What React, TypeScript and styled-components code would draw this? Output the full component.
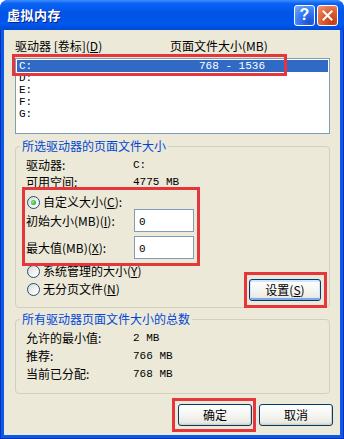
import React from "react";
import styled, { createGlobalStyle } from "styled-components";

const GlobalStyle = createGlobalStyle`
  html, body { margin: 0; padding: 0; background: #ffffff; }
  body {
    font-family: "Noto Sans CJK SC", "Noto Sans", sans-serif;
    font-size: 12px;
    color: #000;
  }
  * { box-sizing: border-box; }
`;

const Window = styled.div`
  width: 344px;
  height: 439px;
  display: flex;
  flex-direction: column;
  background: #0055e5;
  border-radius: 8px 8px 0 0;
  overflow: hidden;
`;

const TitleBar = styled.div`
  height: 30px;
  flex: none;
  display: flex;
  align-items: center;
  gap: 2px;
  padding: 0 6px 0 7px;
  background: linear-gradient(
    180deg,
    #3d8eff 0%,
    #0b62f4 12%,
    #0054e6 45%,
    #0058ee 80%,
    #0048d2 100%
  );
`;

const Title = styled.div`
  flex: 1;
  color: #ffffff;
  font-weight: bold;
  font-size: 13px;
  line-height: 14px;
  letter-spacing: 0.5px;
  text-shadow: 1px 1px 0 #0a1b8a;
`;

const CaptionButton = styled.div<{ $variant: "help" | "close" }>`
  width: 21px;
  height: 21px;
  border: 1px solid #ffffff;
  border-radius: 3px;
  display: flex;
  align-items: center;
  justify-content: center;
  color: #ffffff;
  font-family: "Liberation Sans", Arial, sans-serif;
  font-weight: bold;
  font-size: 16px;
  line-height: 1;
  background: ${(p) =>
    p.$variant === "close"
      ? "radial-gradient(circle at 75% 85%, #c13b14 0%, #e0643a 55%, #f29a76 100%)"
      : "radial-gradient(circle at 75% 85%, #1d4fd2 0%, #3a7ff5 55%, #7aaefc 100%)"};
`;

const Frame = styled.div`
  flex: 1;
  display: flex;
  padding: 0 3px 3px 3px;
  border: 1px solid #0a2fb8;
  border-top: none;
  background: #0a5ae8;
`;

const Body = styled.div`
  flex: 1;
  display: flex;
  flex-direction: column;
  background: #ece9d8;
  padding: 10px 10px 9px 11px;
`;

const HeaderRow = styled.div`
  display: grid;
  grid-template-columns: 155px 1fr;
  line-height: 12px;
  height: 12px;
  margin-bottom: 6px;
  white-space: nowrap;
`;

const Overlayed = styled.div`
  position: relative;
`;

const Highlight = styled.div<{ $inset: string }>`
  position: absolute;
  inset: ${(p) => p.$inset};
  border: 3px solid #e5363c;
  pointer-events: none;
`;

const ListBox = styled.div`
  height: 76px;
  border: 1px solid #7f9db9;
  background: #ffffff;
  padding: 1px;
`;

const ListRow = styled.div<{ $selected?: boolean }>`
  display: grid;
  grid-template-columns: 180px 1fr;
  height: 12px;
  line-height: 12px;
  padding-left: 2px;
  background: ${(p) => (p.$selected ? "#316ac5" : "transparent")};
  color: ${(p) => (p.$selected ? "#ffffff" : "#000000")};
`;

const Mono = styled.span`
  font-family: "Liberation Mono", "Noto Sans CJK SC", monospace;
  font-size: 11px;
  white-space: pre;
`;

const Group = styled.fieldset<{ $gap: number }>`
  margin: ${(p) => p.$gap}px 0 0 0;
  padding: 0;
  border: 1px solid #d0d0bf;
  border-radius: 4px;
  min-width: 0;
`;

const Legend = styled.legend`
  margin-left: 4px;
  padding: 0 2px;
  color: #0046d5;
  font-size: 12px;
  line-height: 12px;
`;

const GroupBody = styled.div<{ $pad: string }>`
  display: flex;
  flex-direction: column;
  padding: ${(p) => p.$pad};
`;

const InfoGrid = styled.div<{ $line: number; $gap: number }>`
  display: grid;
  grid-template-columns: 107px auto;
  row-gap: ${(p) => p.$gap}px;
  line-height: ${(p) => p.$line}px;
  white-space: nowrap;
`;

const CustomArea = styled.div`
  position: relative;
  margin-top: 7px;
  display: flex;
  flex-direction: column;
`;

const RadioRow = styled.label`
  display: flex;
  align-items: center;
  gap: 3px;
  height: 14px;
  line-height: 14px;
  white-space: nowrap;
`;

const RadioCircle = styled.span<{ $checked?: boolean }>`
  width: 13px;
  height: 13px;
  margin-left: 1px;
  flex: none;
  border-radius: 50%;
  border: 1px solid #1c5180;
  background: linear-gradient(135deg, #d9d9d2 0%, #f4f4f1 60%, #ffffff 100%);
  display: inline-flex;
  align-items: center;
  justify-content: center;

  &::after {
    content: "";
    width: 5px;
    height: 5px;
    border-radius: 50%;
    background: radial-gradient(circle at 40% 40%, #a5eb9f 0%, #3fbc3a 55%, #1f8f1c 100%);
    display: ${(p) => (p.$checked ? "block" : "none")};
  }
`;

const FieldRows = styled.div`
  display: flex;
  flex-direction: column;
  gap: 4px;
`;

const FieldRow = styled.div`
  display: grid;
  grid-template-columns: 108px 60px;
  align-items: center;
  height: 23px;
  white-space: nowrap;
`;

const TextBox = styled.div`
  width: 60px;
  height: 23px;
  border: 1px solid #7f9db9;
  background: #ffffff;
  padding-left: 4px;
  line-height: 20px;
`;

const LowerArea = styled.div`
  display: flex;
  align-items: flex-start;
  justify-content: space-between;
  margin-top: 5px;
`;

const RadioColumn = styled.div`
  display: flex;
  flex-direction: column;
  gap: 4px;
`;

const ButtonSpot = styled.div<{ $top?: number }>`
  position: relative;
  margin-top: ${(p) => p.$top ?? 0}px;
  display: flex;
`;

const Button = styled.button<{ $w: number; $focus?: boolean }>`
  width: ${(p) => p.$w}px;
  height: 22px;
  padding: 0;
  border: 1px solid #003c74;
  border-radius: 3px;
  font-family: "Noto Sans CJK SC", "Noto Sans", sans-serif;
  font-size: 12px;
  line-height: 20px;
  color: #000000;
  background: linear-gradient(180deg, #ffffff 0%, #f6f6f3 45%, #ecebe5 85%, #d8d3c6 100%);
  box-shadow: ${(p) =>
    p.$focus
      ? "inset 0 1px 0 1px #cee7ff, inset 0 -1px 0 1px #7fa6e6"
      : "inset -1px -1px 0 #d6d0c0"};
`;

const Footer = styled.div`
  display: flex;
  justify-content: flex-end;
  gap: 7px;
  margin-top: 10px;
  margin-right: -3px;
`;

const Key = styled.u`
  text-decoration-thickness: 1px;
  text-underline-offset: 1px;
`;

export default function App() {
  return (
    <>
      <GlobalStyle />
      <Window>
        <TitleBar>
          <Title>虚拟内存</Title>
          <CaptionButton $variant="help">?</CaptionButton>
          <CaptionButton $variant="close">
            <svg width="11" height="11" viewBox="0 0 11 11">
              <path d="M1.5 1.5 L9.5 9.5 M9.5 1.5 L1.5 9.5" stroke="#ffffff" strokeWidth="2" strokeLinecap="square" />
            </svg>
          </CaptionButton>
        </TitleBar>
        <Frame>
          <Body>
            <HeaderRow>
              <span>
                驱动器 [卷标](<Key>D</Key>)
              </span>
              <span>页面文件大小(MB)</span>
            </HeaderRow>

            <Overlayed>
              <ListBox>
                <ListRow $selected>
                  <Mono>C:</Mono>
                  <Mono>768 - 1536</Mono>
                </ListRow>
                <ListRow>
                  <Mono>D:</Mono>
                </ListRow>
                <ListRow>
                  <Mono>E:</Mono>
                </ListRow>
                <ListRow>
                  <Mono>F:</Mono>
                </ListRow>
                <ListRow>
                  <Mono>G:</Mono>
                </ListRow>
              </ListBox>
              <Highlight $inset="-4px 43px 58px -3px" />
            </Overlayed>

            <Group $gap={6}>
              <Legend>所选驱动器的页面文件大小</Legend>
              <GroupBody $pad="7px 8px 6px 10px">
                <InfoGrid $line={12} $gap={5}>
                  <span>驱动器:</span>
                  <Mono>C:</Mono>
                  <span>可用空间:</span>
                  <Mono>4775 MB</Mono>
                </InfoGrid>

                <CustomArea>
                  <RadioRow>
                    <RadioCircle $checked />
                    <span>
                      自定义大小(<Key>C</Key>):
                    </span>
                  </RadioRow>
                  <FieldRows>
                    <FieldRow>
                      <span>
                        初始大小(MB)(<Key>I</Key>):
                      </span>
                      <TextBox>
                        <Mono>0</Mono>
                      </TextBox>
                    </FieldRow>
                    <FieldRow>
                      <span>
                        最大值(MB)(<Key>X</Key>):
                      </span>
                      <TextBox>
                        <Mono>0</Mono>
                      </TextBox>
                    </FieldRow>
                  </FieldRows>
                  <Highlight $inset="-8px 121px -7px -4px" />
                </CustomArea>

                <LowerArea>
                  <RadioColumn>
                    <RadioRow>
                      <RadioCircle />
                      <span>
                        系统管理的大小(<Key>Y</Key>)
                      </span>
                    </RadioRow>
                    <RadioRow>
                      <RadioCircle />
                      <span>
                        无分页文件(<Key>N</Key>)
                      </span>
                    </RadioRow>
                  </RadioColumn>
                  <ButtonSpot $top={15}>
                    <Button $w={72} $focus>
                      设置(<Key>S</Key>)
                    </Button>
                    <Highlight $inset="-7px -6px -7px -5px" />
                  </ButtonSpot>
                </LowerArea>
              </GroupBody>
            </Group>

            <Group $gap={5}>
              <Legend>所有驱动器页面文件大小的总数</Legend>
              <GroupBody $pad="4px 8px 10px 10px">
                <InfoGrid $line={18} $gap={0}>
                  <span>允许的最小值:</span>
                  <Mono>2 MB</Mono>
                  <span>推荐:</span>
                  <Mono>766 MB</Mono>
                  <span>当前已分配:</span>
                  <Mono>768 MB</Mono>
                </InfoGrid>
              </GroupBody>
            </Group>

            <Footer>
              <ButtonSpot>
                <Button $w={74}>确定</Button>
                <Highlight $inset="-6px -4px -6px -6px" />
              </ButtonSpot>
              <ButtonSpot>
                <Button $w={74}>取消</Button>
              </ButtonSpot>
            </Footer>
          </Body>
        </Frame>
      </Window>
    </>
  );
}
